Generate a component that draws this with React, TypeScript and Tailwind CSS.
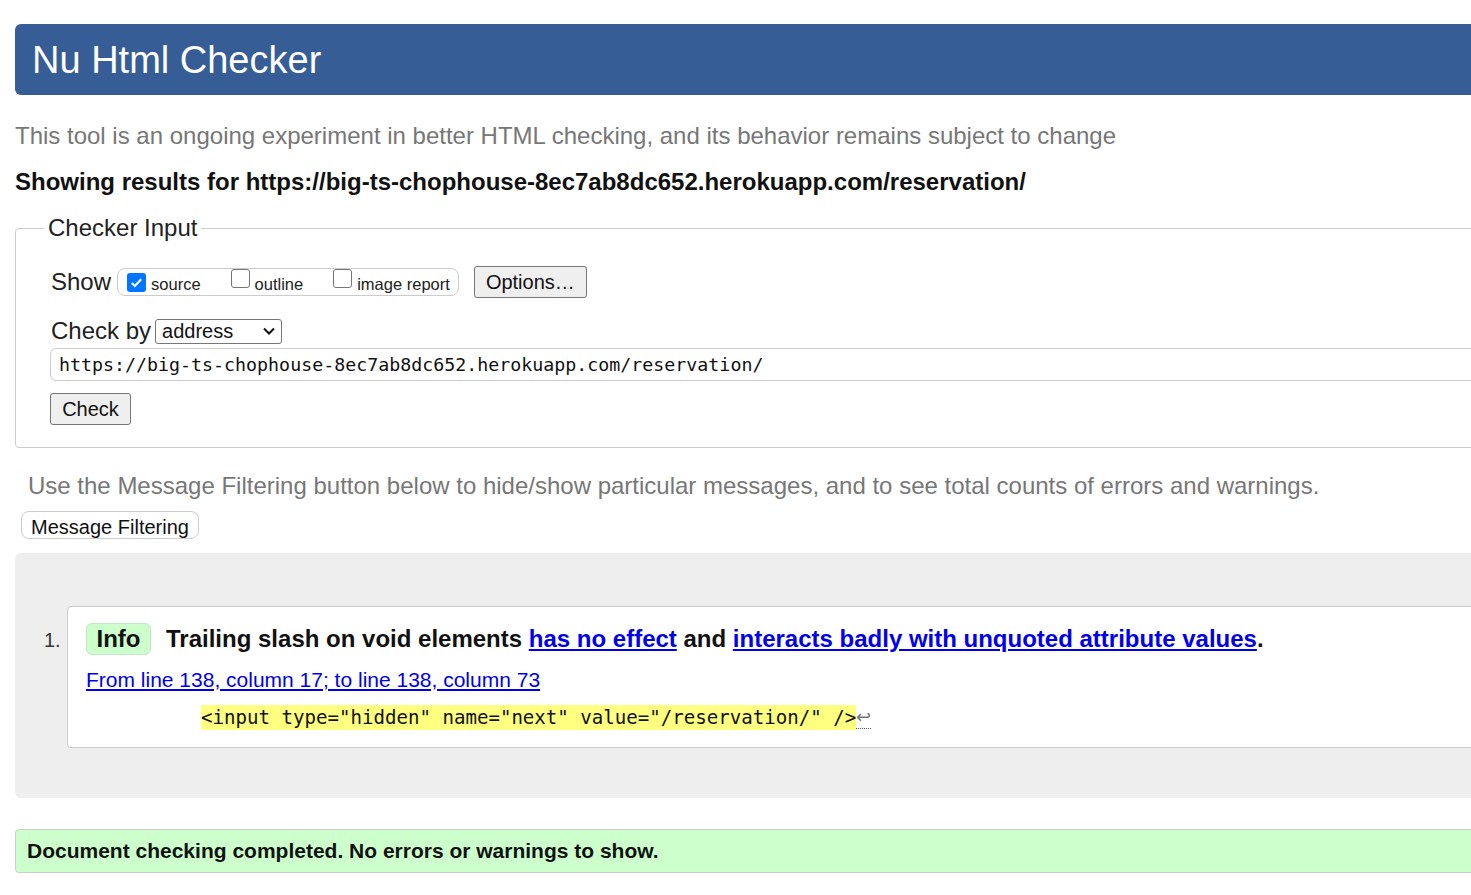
import React from 'react';

const sans = { fontFamily: '"Liberation Sans", Arial, sans-serif' };
const mono = { fontFamily: '"DejaVu Sans Mono", "Liberation Mono", monospace', fontSize: '18.3px' };
const codeFont = { fontFamily: '"DejaVu Sans Mono", "Liberation Mono", monospace', fontSize: '19.1px' };

function Checkbox({ checked }: { checked?: boolean }) {
  return checked ? (
    <span className="inline-flex h-[19px] w-[19px] items-center justify-center rounded-[3px] bg-[#0075ff]">
      <svg viewBox="0 0 16 16" className="h-[15px] w-[15px]" fill="none" stroke="white" strokeWidth="2.2">
        <path d="M3 8.5l3.2 3.2L13 4.5" />
      </svg>
    </span>
  ) : (
    <span className="inline-block h-[19px] w-[19px] rounded-[3px] border border-[#767676] bg-white" />
  );
}

export default function App() {
  return (
    <div className="w-[1471px] h-[895px] overflow-hidden bg-white text-[#222]" style={sans}>
      <div className="w-[1600px]">
        {/* Header */}
        <div className="mt-[24px] ml-[15px] flex h-[71px] items-center rounded-l-[6px] bg-[#365d95] pl-[17px]">
          <h1 className="text-[38px] leading-none text-white">Nu Html Checker</h1>
        </div>

        <p className="ml-[15px] mt-[27px] text-[24px] leading-[28px] text-[#777]">
          This tool is an ongoing experiment in better HTML checking, and its behavior remains subject to change
        </p>
        <p className="ml-[15px] mt-[18px] text-[24px] font-bold leading-[28px] text-[#111]">
          Showing results for https://big-ts-chophouse-8ec7ab8dc652.herokuapp.com/reservation/
        </p>

        {/* Checker Input */}
        <fieldset className="ml-[15px] mt-[18px] h-[234px] rounded-l-[4px] border border-[#ccc] pl-[35px]">
          <legend className="-ml-[7px] px-[4px] text-[24px] leading-[28px] text-[#222]">Checker Input</legend>

          <div className="mt-[22px] flex items-center">
            <span className="text-[24px] text-[#222]">Show</span>
            <div className="ml-[6px] flex h-[28px] items-center rounded-[8px] border border-[#ccc] pl-[9px] pr-[8px] text-[16.5px] text-[#222]">
              <Checkbox checked />
              <span className="ml-[5px] mt-[4px]">source</span>
              <span className="ml-[30px]"><Checkbox /></span>
              <span className="ml-[5px] mt-[4px]">outline</span>
              <span className="ml-[30px]"><Checkbox /></span>
              <span className="ml-[5px] mt-[4px]">image report</span>
            </div>
            <button className="ml-[15px] h-[32px] w-[113px] rounded-[3px] border border-[#767676] bg-[#efefef] text-[20px] text-[#111]">
              Options…
            </button>
          </div>

          <div className="mt-[17px] flex h-[28px] items-center">
            <span className="text-[24px] leading-[28px] text-[#222]">Check by</span>
            <div className="ml-[4px] flex h-[25px] w-[127px] items-center justify-between rounded-[3px] border border-[#767676] pl-[6px] pr-[6px] text-[20px] text-[#111]">
              <span>address</span>
              <svg viewBox="0 0 12 8" className="h-[8px] w-[12px]" fill="none" stroke="#111" strokeWidth="2">
                <path d="M1 1.5l5 5 5-5" />
              </svg>
            </div>
          </div>

          <div
            className="-ml-[1px] mt-[3px] flex h-[33px] items-center rounded-l-[6px] border border-[#ccc] pl-[8px] text-[#111]"
            style={mono}
          >
            https://big-ts-chophouse-8ec7ab8dc652.herokuapp.com/reservation/
          </div>

          <button className="-ml-[1px] mt-[12px] h-[32px] w-[81px] rounded-[3px] border border-[#767676] bg-[#efefef] text-[20px] text-[#111]">
            Check
          </button>
        </fieldset>

        <p className="ml-[28px] mt-[24px] text-[24px] leading-[28px] text-[#777]">
          Use the Message Filtering button below to hide/show particular messages, and to see total counts of errors and warnings.
        </p>
        <button className="ml-[21px] mt-[11px] h-[28px] w-[178px] rounded-[8px] border border-[#ccc] bg-white text-[20px] text-[#111]">
          Message Filtering
        </button>

        {/* Results */}
        <div className="ml-[15px] mt-[12px] h-[245px] rounded-l-[6px] bg-[#eee] pt-[53px]">
          <div className="flex">
            <span className="w-[52px] pt-[19px] pl-[29px] text-[20px] text-[#333]">1.</span>
            <div className="h-[142px] flex-1 rounded-l-[4px] border border-[#ccc] bg-white pl-[18px] pt-[14px]">
              <div className="flex items-center text-[24px] font-bold text-[#111]">
                <span className="flex h-[32px] w-[65px] items-center justify-center rounded-[6px] border border-[#c3e6c3] bg-[#ccffcc]">
                  Info
                </span>
                <span className="ml-[15px]">
                  Trailing slash on void elements{' '}
                  <a className="text-[#0000ee] underline">has no effect</a> and{' '}
                  <a className="text-[#0000ee] underline">interacts badly with unquoted attribute values</a>.
                </span>
              </div>
              <a className="mt-[10px] block text-[21px] leading-[26px] text-[#0000ee] underline">
                From line 138, column 17; to line 138, column 73
              </a>
              <div className="mt-[12px] flex items-center pl-[115px]">
                <span className="whitespace-pre bg-[#ffff80] leading-[25px] text-[#111]" style={codeFont}>
                  {'<input type="hidden" name="next" value="/reservation/" />'}
                </span>
                <span className="border-b border-dotted border-[#555] text-[18px] leading-[22px] text-[#777]">↩</span>
              </div>
            </div>
          </div>
        </div>

        <div className="ml-[15px] mt-[31px] flex h-[44px] items-center rounded-l-[4px] border border-[#ccc] bg-[#ccffcc] pl-[11px] text-[21px] font-bold text-[#111]">
          Document checking completed. No errors or warnings to show.
        </div>
      </div>
    </div>
  );
}
